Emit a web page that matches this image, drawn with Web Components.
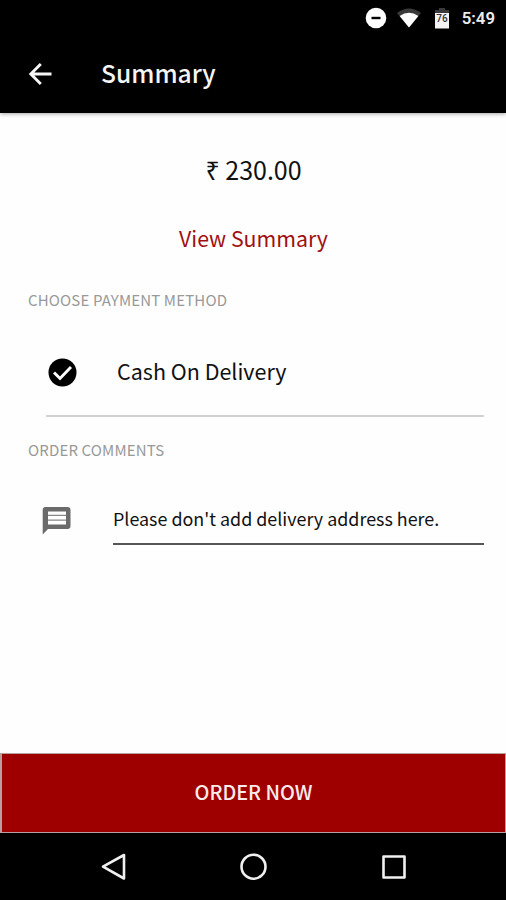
<!DOCTYPE html>
<html lang="en">
<head>
<meta charset="utf-8">
<title>Summary</title>
<style>
  body {
    margin: 0;
    background: #fefefe;
    color: #111;
    font-family: "Noto Sans CJK SC", "Noto Sans", sans-serif;
  }
</style>
</head>
<body>
<order-screen></order-screen>

<script>
// small helper, every element of the page renders the same way
class BaseElement extends HTMLElement {
  constructor() {
    super();
    this.attachShadow({ mode: "open" });
    this.shadowRoot.innerHTML = this.template();
  }
}

class StatusBar extends BaseElement {
  template() {
    return `
      <style>
        :host {
          display: flex;
          align-items: center;
          justify-content: flex-end;
          height: 36px;
          box-sizing: border-box;
          padding-right: 11px;
          background: #000;
          color: #ececec;
          font: 600 16.8px/36px Roboto, sans-serif;
        }
        svg { display: block; }
        .dnd { margin-right: 10px; }
        .wifi { margin-right: 13px; }
        .battery { margin-right: 12px; }
      </style>
      <svg class="dnd" width="22" height="22" viewBox="0 0 22 22">
        <circle cx="11" cy="11" r="10.3" fill="#fff"/>
        <path d="M6.500 11h9" stroke="#000" stroke-width="2.400"/>
      </svg>
      <svg class="wifi" width="24" height="20" viewBox="0 0 24 20">
        <path d="M0 5Q12-4 24 5L12 19.500z" fill="#3a3a3a"/>
        <path d="M2.600 8Q12 1.500 21.400 8L12 19.500z" fill="#fff"/>
      </svg>
      <svg class="battery" width="16" height="21" viewBox="0 0 16 21">
        <path d="M5 0h6v2h4v4H1V2h4z" fill="#3a3a3a"/>
        <path d="M1 5h14v15.500H1z" fill="#f4f4f4"/>
        <text x="8" y="13.500" text-anchor="middle" font-family="Roboto" font-size="10" font-weight="500" fill="#333">76</text>
      </svg>
      <span>5:49</span>
    `;
  }
}
customElements.define("status-bar", StatusBar);

class AppBar extends BaseElement {
  template() {
    return `
      <style>
        :host {
          display: flex;
          align-items: center;
          height: 77px;
          box-sizing: border-box;
          padding: 0 0 2px 24px;
          background: #000;
          color: #f5f5f5;
          font-size: 24.600px;
          font-weight: 500;
          line-height: 36px;
          box-shadow: 0 1px 4px rgba(0, 0, 0, 0.35);
        }
        svg { display: block; margin-right: 45px; }
        span { margin-bottom: 4px; }
      </style>
      <svg width="32" height="32" viewBox="0 0 32 32" fill="none" stroke="#f5f5f5" stroke-width="2.900">
        <path d="M27.500 16H7M16.800 6L6.800 16l10 10"/>
      </svg>
      <span><slot></slot></span>
    `;
  }
}
customElements.define("app-bar", AppBar);

class SectionTitle extends BaseElement {
  template() {
    return `
      <style>
        :host {
          display: block;
          padding-left: 28px;
          color: #999;
          font-size: 15px;
          line-height: 24px;
          letter-spacing: 0.150px;
        }
      </style>
      <slot></slot>
    `;
  }
}
customElements.define("section-title", SectionTitle);

class PaymentOption extends BaseElement {
  template() {
    return `
      <style>
        :host {
          display: flex;
          align-items: center;
          height: 88px;
          margin: 0 22px 0 46px;
          border-bottom: 2px solid #d2d2d2;
          font-size: 21.500px;
          line-height: 32px;
        }
        svg { display: block; margin: 2px 39px 0 1px; }
      </style>
      <svg width="31" height="31" viewBox="0 0 31 31">
        <circle cx="15.500" cy="15.500" r="14" fill="#000"/>
        <path d="M7 15.500l6 6L24 10" fill="none" stroke="#fff" stroke-width="2.900"/>
      </svg>
      <span><slot></slot></span>
    `;
  }
}
customElements.define("payment-option", PaymentOption);

class CommentField extends BaseElement {
  template() {
    return `
      <style>
        :host {
          display: flex;
          align-items: center;
          margin: 0 22px 0 42px;
        }
        svg { display: block; margin: 1px 42px 0 0; }
        .input {
          flex: 1;
          height: 48px;
          border-bottom: 2px solid #555;
          font-size: 17.900px;
          line-height: 46px;
          white-space: nowrap;
        }
      </style>
      <svg width="29" height="29" viewBox="0 0 29 29">
        <path d="M3.500 1h22a3 3 0 0 1 3 3v16a3 3 0 0 1-3 3H6l-5.300 5.400V4a3 3 0 0 1 2.800-3z" fill="#6b6b6b"/>
        <path d="M6 5.500h18v13H6z" fill="#fefefe"/>
        <path d="M6 9.400h18M6 14.200h18" stroke="#888" stroke-width="1.200"/>
      </svg>
      <div class="input"><slot></slot></div>
    `;
  }
}
customElements.define("comment-field", CommentField);

class OrderButton extends BaseElement {
  template() {
    return `
      <style>
        :host { display: block; }
        button {
          display: block;
          width: 100%;
          height: 80px;
          padding: 0 0 2px;
          border: 1px solid #b9a0a0;
          border-left-width: 2px;
          background: #9e0000;
          color: #fbeaea;
          font: inherit;
          font-size: 19.800px;
          font-weight: 500;
          line-height: 30px;
        }
      </style>
      <button><slot></slot></button>
    `;
  }
}
customElements.define("order-button", OrderButton);

class NavBar extends BaseElement {
  template() {
    return `
      <style>
        :host {
          display: flex;
          align-items: center;
          justify-content: center;
          gap: 112px;
          height: 67px;
          background: #000;
        }
        svg { display: block; fill: none; stroke: #f0f0f0; stroke-width: 2.600; stroke-linejoin: round; }
      </style>
      <svg width="28" height="28" viewBox="0 0 28 28"><path d="M25 2v23.500L4 13.700z"/></svg>
      <svg width="28" height="28" viewBox="0 0 28 28"><circle cx="14.500" cy="13.700" r="12"/></svg>
      <svg width="28" height="28" viewBox="0 0 28 28"><path d="M4.500 3.500h21v21h-21z"/></svg>
    `;
  }
}
customElements.define("nav-bar", NavBar);

class OrderScreen extends BaseElement {
  template() {
    return `
      <style>
        :host {
          display: flex;
          flex-direction: column;
          height: 900px;
          overflow: hidden;
        }
        main { flex: 1; }
        .price, .link { text-align: center; padding-left: 1px; }
        .price { margin-top: 36px; font-size: 25px; line-height: 40px; }
        .link { margin-top: 33px; color: #a01010; font-size: 21.300px; line-height: 32px; }
        .payment { margin-top: 34px; }
        payment-option { margin-top: 15px; }
        .comments { margin-top: 21px; }
        comment-field { margin-top: 33px; }
      </style>
      <status-bar></status-bar>
      <app-bar>Summary</app-bar>
      <main>
        <div class="price">₹ 230.00</div>
        <div class="link">View Summary</div>
        <section-title class="payment">CHOOSE PAYMENT METHOD</section-title>
        <payment-option>Cash On Delivery</payment-option>
        <section-title class="comments">ORDER COMMENTS</section-title>
        <comment-field>Please don't add delivery address here.</comment-field>
      </main>
      <order-button>ORDER NOW</order-button>
      <nav-bar></nav-bar>
    `;
  }
}
customElements.define("order-screen", OrderScreen);
</script>
</body>
</html>
